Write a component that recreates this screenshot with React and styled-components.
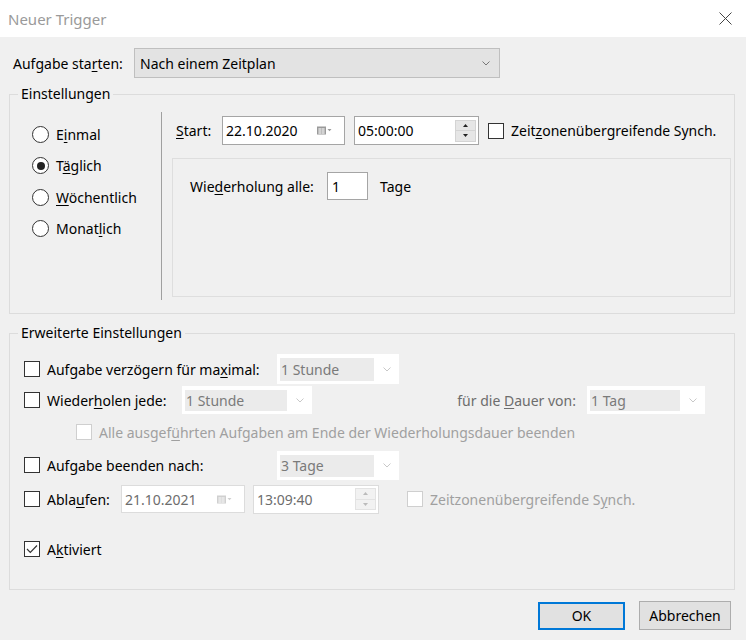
import React from "react";
import styled, { createGlobalStyle } from "styled-components";

const GlobalStyle = createGlobalStyle`
  html, body {
    margin: 0;
    padding: 0;
    background: #f0f0f0;
  }
  body {
    font-family: "Noto Sans", "Open Sans", sans-serif;
    font-size: 14px;
    color: #000;
  }
  u {
    text-underline-offset: 2px;
  }
`;

const Dialog = styled.div`
  width: 746px;
  height: 640px;
  display: flex;
  flex-direction: column;
  background: #f0f0f0;
  overflow: hidden;
`;

const TitleBar = styled.div`
  height: 37px;
  flex-shrink: 0;
  background: #fff;
  display: flex;
  align-items: center;
  justify-content: space-between;
  padding: 0 14px 0 8px;
`;

const Title = styled.span`
  color: #9a9a9a;
  font-size: 15px;
`;

const Content = styled.div`
  display: flex;
  flex-direction: column;
  padding: 0 11px 0 9px;
`;

const Row = styled.div`
  display: flex;
  align-items: center;
  height: ${(p) => p.$h || 30}px;
  margin-top: ${(p) => p.$mt || 0}px;
  padding-left: ${(p) => p.$pl || 0}px;
  flex-shrink: 0;
`;

const Label = styled.span`
  display: inline-block;
  width: ${(p) => (p.$w ? `${p.$w}px` : "auto")};
  margin-left: ${(p) => p.$ml || 0}px;
  text-align: ${(p) => p.$align || "left"};
  color: ${(p) => (p.$muted ? "#a0a0a0" : p.$dim ? "#6d6d6d" : "#000")};
  white-space: nowrap;
  flex-shrink: 0;
`;

const Combo = styled.div`
  width: 366px;
  height: 30px;
  box-sizing: border-box;
  background: #e3e3e3;
  border: 1px solid #bfbfbf;
  display: flex;
  align-items: center;
  justify-content: space-between;
  padding: 0 9px 0 5px;
`;

const DisabledCombo = styled.div`
  width: ${(p) => p.$w}px;
  height: ${(p) => p.$h || 30}px;
  margin-left: ${(p) => p.$ml || 0}px;
  box-sizing: border-box;
  background: #fff;
  display: flex;
  align-items: stretch;
  padding: 4px 0 3px 3px;
  flex-shrink: 0;
`;

const ComboText = styled.span`
  flex: 1;
  background: #ebebeb;
  color: #7a7a7a;
  display: flex;
  align-items: center;
  padding-left: 1px;
`;

const ComboArrow = styled.span`
  width: 25px;
  display: flex;
  align-items: center;
  justify-content: center;
`;

const Group = styled.fieldset`
  margin: ${(p) => p.$mt || 0}px 0 0 0;
  padding: 0;
  border: 1px solid #dcdcdc;
  min-width: 0;
  width: 726px;
  box-sizing: border-box;
`;

const Legend = styled.legend`
  margin-left: 8px;
  padding: 0 3px;
  line-height: 20px;
  font-size: 14px;
`;

const ScheduleBody = styled.div`
  display: flex;
  padding: 8px 3px 13px 22px;
`;

const RadioColumn = styled.div`
  width: 130px;
  display: flex;
  flex-direction: column;
  padding-top: 7px;
  border-right: 1px solid #a0a0a0;
  height: 188px;
  box-sizing: border-box;
`;

const RadioRow = styled.div`
  display: flex;
  align-items: center;
  height: 31.3px;
`;

const RadioCircle = styled.span`
  width: 17px;
  height: 17px;
  box-sizing: border-box;
  border-radius: 50%;
  border: 1px solid #333;
  background: #fff;
  display: inline-flex;
  align-items: center;
  justify-content: center;
  margin-right: 7px;
  &::after {
    content: "";
    display: ${(p) => (p.$checked ? "block" : "none")};
    width: 8px;
    height: 8px;
    border-radius: 50%;
    background: #222;
  }
`;

const RightColumn = styled.div`
  flex: 1;
  display: flex;
  flex-direction: column;
  padding-left: 10px;
`;

const Field = styled.div`
  width: ${(p) => p.$w}px;
  height: ${(p) => p.$h || 29}px;
  margin-left: ${(p) => p.$ml || 0}px;
  box-sizing: border-box;
  background: #fff;
  border: 1px solid ${(p) => (p.$disabled ? "#dcdcdc" : "#a5a5a5")};
  color: ${(p) => (p.$disabled ? "#6d6d6d" : "#000")};
  display: flex;
  align-items: center;
  justify-content: space-between;
  padding: 0 ${(p) => (p.$spin ? 2 : 12)}px 0 3px;
  flex-shrink: 0;
`;

const Spinner = styled.div`
  display: flex;
  flex-direction: column;
  width: 21px;
  height: 22px;
`;

const SpinButton = styled.span`
  flex: 1;
  background: ${(p) => (p.$disabled ? "#f2f2f2" : "#e6e6e6")};
  border: 1px solid ${(p) => (p.$disabled ? "#e3e3e3" : "#d4d4d4")};
  display: flex;
  align-items: center;
  justify-content: center;
  & + & {
    margin-top: -1px;
  }
`;

const Panel = styled.div`
  height: 139px;
  margin-top: 13px;
  box-sizing: border-box;
  border: 1px solid #dedede;
  padding: 13px 0 0 17px;
`;

const SmallInput = styled.div`
  width: 41px;
  height: 28px;
  box-sizing: border-box;
  background: #fff;
  border: 1px solid #a5a5a5;
  display: flex;
  align-items: center;
  padding-left: 4px;
  margin: 0 12px 0 0;
`;

const Check = styled.span`
  width: 16px;
  height: 16px;
  box-sizing: border-box;
  border: 1px solid ${(p) => (p.$disabled ? "#cfcfcf" : "#333")};
  background: #fff;
  display: inline-flex;
  align-items: center;
  justify-content: center;
  margin-left: ${(p) => p.$ml || 0}px;
  margin-right: 7px;
  flex-shrink: 0;
`;

const AdvancedBody = styled.div`
  display: flex;
  flex-direction: column;
  padding: 11px 0 25px 14px;
`;

const Footer = styled.div`
  display: flex;
  justify-content: flex-end;
  align-items: center;
  gap: 14px;
  margin-top: 11px;
  padding-right: 4px;
`;

const Button = styled.button`
  width: ${(p) => p.$w}px;
  height: ${(p) => (p.$primary ? 28 : 29)}px;
  box-sizing: border-box;
  background: #e1e1e1;
  border: ${(p) => (p.$primary ? "2px solid #0078d7" : "1px solid #adadad")};
  font-family: inherit;
  font-size: 14px;
  color: #000;
  padding: 0;
`;

const Chevron = ({ color = "#777" }) => (
  <svg width="8" height="5" viewBox="0 0 8 5">
    <path d="M0.5 0.5 L4 4 L7.5 0.5" fill="none" stroke={color} strokeWidth="1" />
  </svg>
);

const CloseIcon = () => (
  <svg width="13" height="13" viewBox="0 0 13 13">
    <path d="M0.5 0.5 L12.5 12.5 M12.5 0.5 L0.5 12.5" stroke="#444" strokeWidth="1" />
  </svg>
);

const CalendarIcon = ({ disabled }) => {
  const c = disabled ? "#d0d0d0" : "#9a9a9a";
  return (
    <svg width="15" height="9" viewBox="0 0 15 9">
      <rect x="0" y="0.5" width="9" height="8" fill={c} />
      <path d="M1 3 H8 M1 5 H8 M1 7 H8 M3 2 V8 M6 2 V8" stroke="#f4f4f4" strokeWidth="0.8" />
      <path d="M10.5 3 H14.5 L12.5 5.2 Z" fill={c} />
    </svg>
  );
};

const Tri = ({ up, disabled }) => (
  <svg width="5" height="3" viewBox="0 0 5 3">
    <path d={up ? "M0 3 L2.5 0 L5 3 Z" : "M0 0 L2.5 3 L5 0 Z"} fill={disabled ? "#bbb" : "#222"} />
  </svg>
);

const CheckMark = () => (
  <svg width="12" height="10" viewBox="0 0 12 10">
    <path d="M1 5 L4.3 8.3 L11 1.5" fill="none" stroke="#333" strokeWidth="1.2" />
  </svg>
);

const Radio = ({ checked, children }) => (
  <RadioRow>
    <RadioCircle $checked={checked} />
    <span>{children}</span>
  </RadioRow>
);

const TimeField = ({ value, w, ml, disabled }) => (
  <Field $w={w} $ml={ml} $spin $disabled={disabled}>
    <span>{value}</span>
    <Spinner>
      <SpinButton $disabled={disabled}>
        <Tri up disabled={disabled} />
      </SpinButton>
      <SpinButton $disabled={disabled}>
        <Tri disabled={disabled} />
      </SpinButton>
    </Spinner>
  </Field>
);

const Combobox = ({ value, w, h, ml }) => (
  <DisabledCombo $w={w} $h={h} $ml={ml}>
    <ComboText>{value}</ComboText>
    <ComboArrow>
      <Chevron color="#c8c8c8" />
    </ComboArrow>
  </DisabledCombo>
);

export default function App() {
  return (
    <>
      <GlobalStyle />
      <Dialog>
        <TitleBar>
          <Title>Neuer Trigger</Title>
          <CloseIcon />
        </TitleBar>
        <Content>
          <Row $mt={11} $pl={4}>
            <Label $w={121}>
              Aufgabe sta<u>r</u>ten:
            </Label>
            <Combo>
              <span>Nach einem Zeitplan</span>
              <Chevron />
            </Combo>
          </Row>

          <Group $mt={6}>
            <Legend>Einstellungen</Legend>
            <ScheduleBody>
              <RadioColumn>
                <Radio>
                  E<u>i</u>nmal
                </Radio>
                <Radio checked>
                  T<u>ä</u>glich
                </Radio>
                <Radio>
                  <u>W</u>öchentlich
                </Radio>
                <Radio>
                  Monat<u>l</u>ich
                </Radio>
              </RadioColumn>
              <RightColumn>
                <Row $mt={4} $h={29} $pl={4}>
                  <Label $w={46}>
                    <u>S</u>tart:
                  </Label>
                  <Field $w={123}>
                    <span>22.10.2020</span>
                    <CalendarIcon />
                  </Field>
                  <TimeField value="05:00:00" w={125} ml={9} />
                  <Check $ml={9} />
                  <Label>
                    Zeit<u>z</u>onenübergreifende Synch.
                  </Label>
                </Row>
                <Panel>
                  <Row $h={28}>
                    <Label $w={137}>
                      Wie<u>d</u>erholung alle:
                    </Label>
                    <SmallInput>1</SmallInput>
                    <Label>Tage</Label>
                  </Row>
                </Panel>
              </RightColumn>
            </ScheduleBody>
          </Group>

          <Group $mt={9}>
            <Legend>Erweiterte Einstellungen</Legend>
            <AdvancedBody>
              <Row $h={30}>
                <Check />
                <Label $w={230}>
                  Aufgabe verzögern für ma<u>x</u>imal:
                </Label>
                <Combobox value="1 Stunde" w={122} />
              </Row>
              <Row $h={30} $mt={1}>
                <Check />
                <Label $w={135}>
                  Wieder<u>h</u>olen jede:
                </Label>
                <Combobox value="1 Stunde" w={130} h={28} />
                <Label $w={264} $align="right" $dim>
                  für die <u>D</u>auer von:
                </Label>
                <Combobox value="1 Tag" w={118} h={28} ml={11} />
              </Row>
              <Row $h={34}>
                <Check $ml={52} $disabled />
                <Label $muted>
                  Alle ausgef<u>ü</u>hrten Aufgaben am Ende der Wiederholungsdauer beenden
                </Label>
              </Row>
              <Row $h={32}>
                <Check />
                <Label $w={230}>
                  Auf<u>g</u>abe beenden nach:
                </Label>
                <Combobox value="3 Tage" w={122} h={29} />
              </Row>
              <Row $h={30} $mt={3}>
                <Check />
                <Label $w={74}>
                  Abla<u>u</u>fen:
                </Label>
                <Field $w={124} $h={28} $disabled>
                  <span>21.10.2021</span>
                  <CalendarIcon disabled />
                </Field>
                <TimeField value="13:09:40" w={126} ml={8} disabled />
                <Check $ml={28} $disabled />
                <Label $muted>
                  Zeitzonenübergreifende S<u>y</u>nch.
                </Label>
              </Row>
              <Row $h={30} $mt={20}>
                <Check>
                  <CheckMark />
                </Check>
                <Label>
                  A<u>k</u>tiviert
                </Label>
              </Row>
            </AdvancedBody>
          </Group>

          <Footer>
            <Button $primary $w={87}>
              OK
            </Button>
            <Button $w={92}>Abbrechen</Button>
          </Footer>
        </Content>
      </Dialog>
    </>
  );
}
